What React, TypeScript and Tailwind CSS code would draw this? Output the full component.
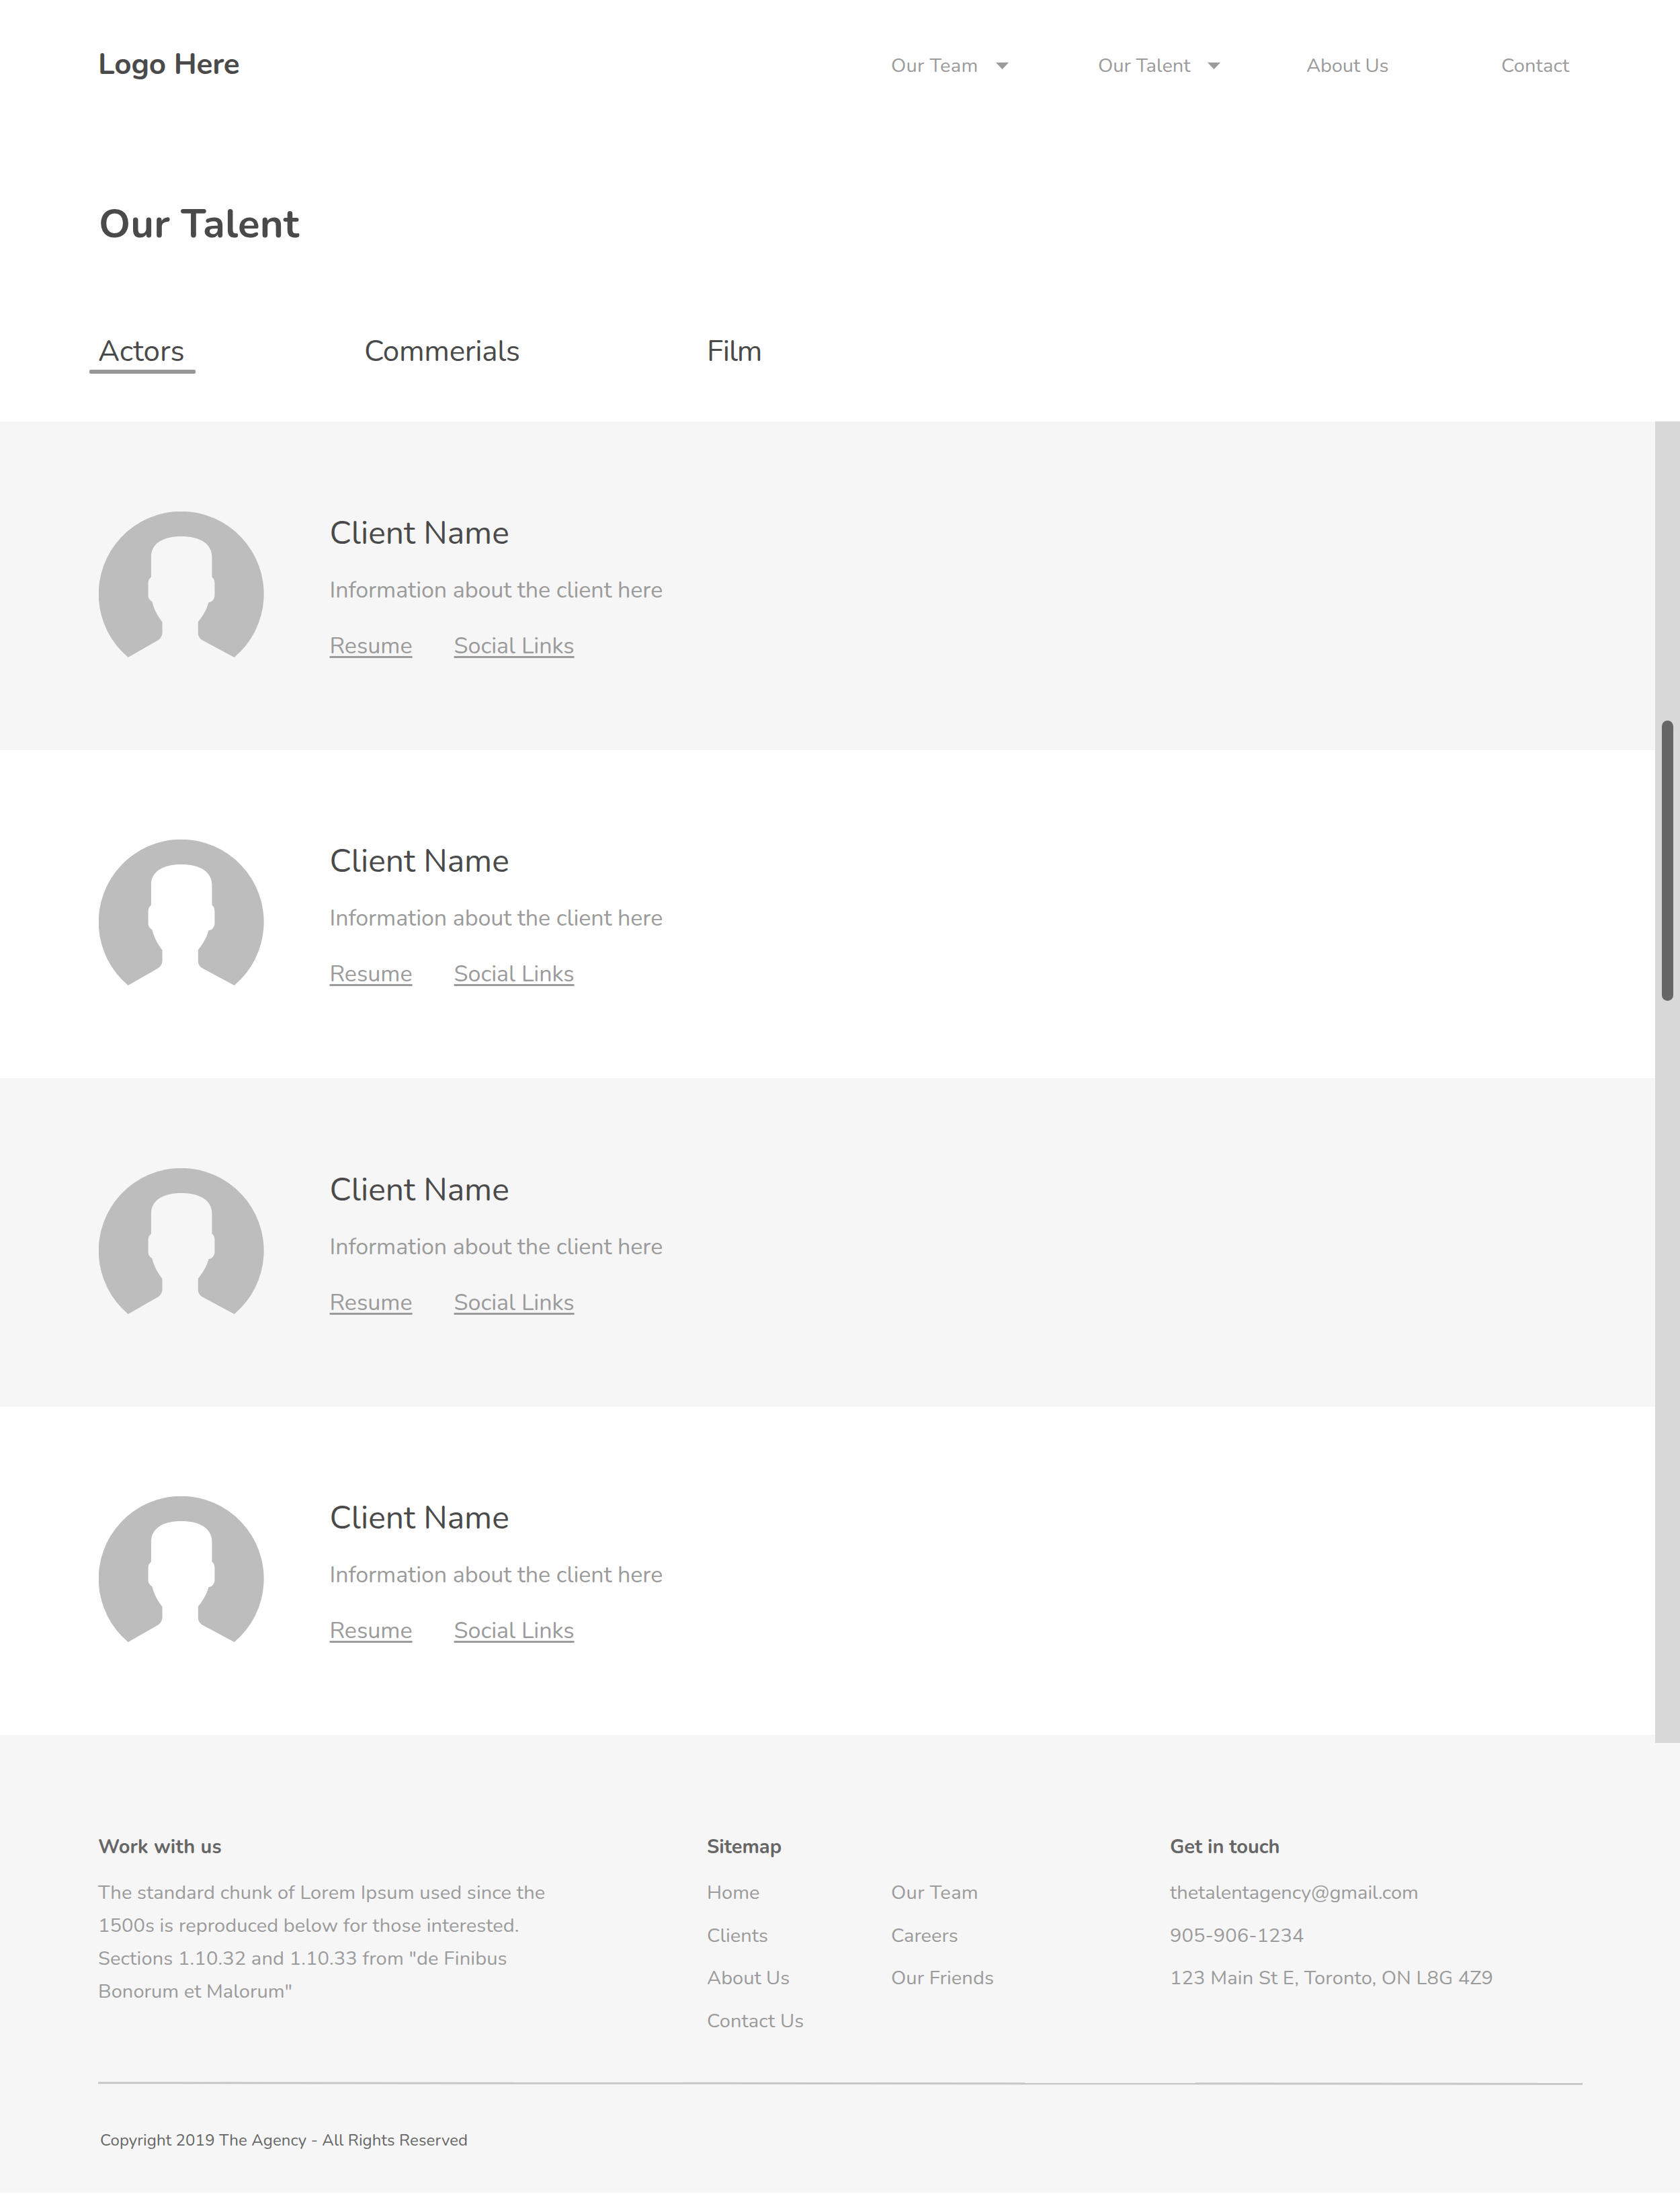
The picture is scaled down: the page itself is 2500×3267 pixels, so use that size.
import React, { useState } from 'react';
import clsx from 'clsx';

interface Client {
  id: number;
  name: string;
  info: string;
}

const clients: Client[] = [1, 2, 3, 4].map((id) => ({
  id,
  name: 'Client Name',
  info: 'Information about the client here',
}));

const tabs = [
  { label: 'Actors', className: 'w-[396px]' },
  { label: 'Commerials', className: 'w-[510px] tracking-[-0.3px]' },
  { label: 'Film', className: 'tracking-[-1.1px]' },
];

const Caret = () => (
  <svg width="19" height="10" viewBox="0 0 19 10" className="mt-[15px] fill-[#9b9b9b]">
    <path d="M0 0h19L9.500 10z" />
  </svg>
);

const Avatar = () => (
  <svg viewBox="79 62 739 652" className="mt-[133.5px] h-[217px] w-[246px] shrink-0 fill-[#bdbdbd]">
    <path d="M210 714A369.500 369.500 0 1 1 685 714L541 637C530 630 523 618 523 606V555C545 528 562 498 570 468C585 467 597 453 597 436V382C597 369 592 360 585 355V265C585 205 530 173 448 173C366 173 313 205 313 265V355C306 361 300 369 300 382V436C300 450 307 459 317 464C325 497 340 527 363 556V606C362 618 355 630 345 637Z" />
  </svg>
);

const Header = () => (
  <header className="flex h-[293px] items-start pl-[146px] pt-[66px]">
    <div className="w-[1180px] text-[44px] font-bold leading-[60px] tracking-[-0.2px] text-[#4a4a4a]">
      Logo Here
    </div>
    <nav className="mt-[12px] flex text-[29px] leading-[40px]">
      <a className="flex w-[308px]">
        <span className="w-[156px] tracking-[0.3px]">Our Team</span>
        <Caret />
      </a>
      <a className="flex w-[310px]">
        <span className="w-[163px]">Our Talent</span>
        <Caret />
      </a>
      <a className="w-[290px] tracking-[-0.1px]">About Us</a>
      <a className="tracking-[0.16px]">Contact</a>
    </nav>
  </header>
);

const ClientRow: React.FC<{ client: Client; shaded: boolean }> = ({ client, shaded }) => (
  <section className={clsx('flex h-[488.5px] pl-[146.5px]', shaded ? 'bg-[#f6f6f6]' : 'bg-white')}>
    <Avatar />
    <div className="ml-[98px] pt-[135.5px]">
      <h2 className="text-[48px] leading-[60px] text-[#4a4a4a]">{client.name}</h2>
      <p className="mt-8 text-[34px] leading-[46px] tracking-[-0.07px]">{client.info}</p>
      <div className="mt-[37px] flex gap-[62px] text-[34px] leading-[46px] [text-decoration-skip-ink:none]">
        <a className="underline decoration-[2.5px] underline-offset-[4px]">Resume</a>
        <a className="underline decoration-[2.5px] underline-offset-[4px]">Social Links</a>
      </div>
    </div>
  </section>
);

const Footer = () => (
  <footer className="h-[681px] bg-[#f6f6f6] pl-[146px] pt-[147px] text-[29px] leading-[40px]">
    <div className="grid h-[369px] grid-cols-[906px_274px_415px_auto] items-start">
      <div>
        <h3 className="font-bold tracking-[0.2px] text-[#666]">Work with us</h3>
        <p className="mt-[23px] whitespace-nowrap leading-[49px]">
          <span className="tracking-[0.11px]">The standard chunk of Lorem Ipsum used since the</span>
          <br />
          <span className="tracking-[0.08px]">1500s is reproduced below for those interested.</span>
          <br />
          <span className="tracking-[0.14px]">Sections 1.10.32 and 1.10.33 from "de Finibus</span>
          <br />
          <span className="tracking-[0.06px]">Bonorum et Malorum"</span>
        </p>
      </div>
      <div>
        <h3 className="font-bold text-[#666]">Sitemap</h3>
        <ul className="mt-7 space-y-[23.5px]">
          <li>Home</li>
          <li>Clients</li>
          <li>About Us</li>
          <li className="tracking-[0.15px]">Contact Us</li>
        </ul>
      </div>
      <ul className="mt-[68px] space-y-[23.5px]">
        <li className="tracking-[0.35px]">Our Team</li>
        <li>Careers</li>
        <li className="tracking-[0.1px]">Our Friends</li>
      </ul>
      <div>
        <h3 className="font-bold text-[#666]">Get in touch</h3>
        <ul className="mt-7 space-y-[23.5px]">
          <li className="tracking-[-0.06px]">thetalentagency@gmail.com</li>
          <li className="tracking-[0.07px]">905-906-1234</li>
          <li className="tracking-[0.16px]">123 Main St E, Toronto, ON L8G 4Z9</li>
        </ul>
      </div>
    </div>
    <div className="mt-[1px] h-[3px] w-[2209px] rotate-[0.04deg] bg-[#c6c6c6]" />
    <p className="ml-[3px] mt-[66px] text-[24px] leading-[34px] tracking-[0.13px] text-[#666]">
      Copyright 2019 The Agency - All Rights Reserved
    </p>
  </footer>
);

const App: React.FC = () => {
  const [activeTab, setActiveTab] = useState('Actors');

  return (
    <div className="min-h-[3267px] w-[2500px] bg-white font-['Nunito',Lato,sans-serif] text-[#9b9b9b]">
      <Header />
      <h1 className="pl-[147px] text-[60px] font-bold leading-[80px] tracking-[0.17px] text-[#4a4a4a]">
        Our Talent
      </h1>

      <div className="flex h-[254px] pl-[146px] pt-[122px] text-[44px] leading-[56px] text-[#4a4a4a]">
        {tabs.map((tab) => (
          <div key={tab.label} className={tab.className} onClick={() => setActiveTab(tab.label)}>
            {tab.label}
            {activeTab === tab.label && (
              <div className="-ml-[13px] -mt-[1px] h-[6px] w-[158px] rounded-[2px] bg-[#979797]" />
            )}
          </div>
        ))}
      </div>

      <main className="flex h-[1954px]">
        <div className="w-[2463px]">
          {clients.map((client, i) => (
            <ClientRow key={client.id} client={client} shaded={i % 2 === 0} />
          ))}
        </div>
        {/* Scrollbar, runs slightly past the list into the footer */}
        <div className="relative z-10 h-[1966px] w-[37px] bg-[#d8d8d8] pl-[10px] pt-[445px]">
          <div className="h-[417px] w-[17px] rounded-full bg-[#666]" />
        </div>
      </main>

      <Footer />
    </div>
  );
};

export default App;
